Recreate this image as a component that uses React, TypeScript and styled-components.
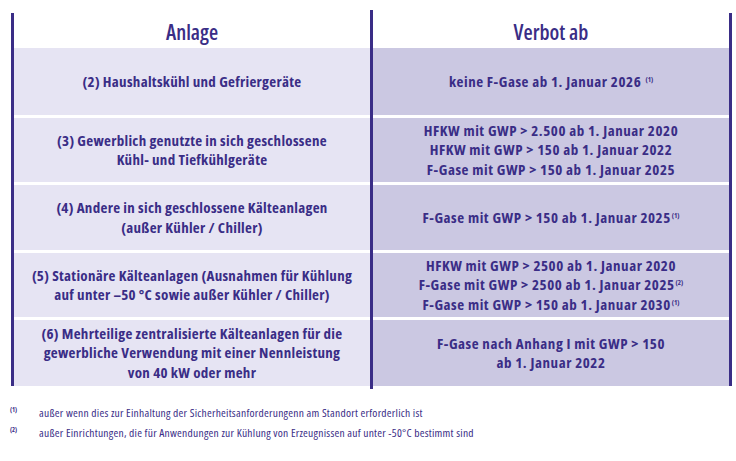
import styled, { createGlobalStyle } from "styled-components";

const ink = "#3a2d86";

const GlobalStyle = createGlobalStyle`
    html, body {
        margin: 0;
        padding: 0;
        background: #fff;
    }
    body {
        font-family: "Open Sans", "DejaVu Sans Condensed", sans-serif;
        font-stretch: 75%;
        color: ${ink};
    }
`;

interface Row {
    anlage: React.ReactNode;
    verbot: React.ReactNode;
    height: number;
}

const Sup = ({ n }: { n: number }) => <Mark>({n})</Mark>;

const rows: Row[] = [
    {
        anlage: "(2) Haushaltskühl und Gefriergeräte",
        verbot: <>keine F-Gase ab 1. Januar 2026 <Sup n={1} /></>,
        height: 67,
    },
    {
        anlage: <>(3) Gewerblich genutzte in sich geschlossene<br />Kühl- und Tiefkühlgeräte</>,
        verbot: (
            <>
                HFKW mit GWP &gt; 2.500 ab 1. Januar 2020<br />
                HFKW mit GWP &gt; 150 ab 1. Januar 2022<br />
                F-Gase mit GWP &gt; 150 ab 1. Januar 2025
            </>
        ),
        height: 64,
    },
    {
        anlage: <>(4) Andere in sich geschlossene Kälteanlagen<br />(außer Kühler / Chiller)</>,
        verbot: <>F-Gase mit GWP &gt; 150 ab 1. Januar 2025<Sup n={1} /></>,
        height: 65,
    },
    {
        anlage: <>(5) Stationäre Kälteanlagen (Ausnahmen für Kühlung<br />auf unter –50 °C sowie außer Kühler / Chiller)</>,
        verbot: (
            <>
                HFKW mit GWP &gt; 2500 ab 1. Januar 2020<br />
                F-Gase mit GWP &gt; 2500 ab 1. Januar 2025<Sup n={2} /><br />
                F-Gase mit GWP &gt; 150 ab 1. Januar 2030<Sup n={1} />
            </>
        ),
        height: 64,
    },
    {
        anlage: (
            <>
                (6) Mehrteilige zentralisierte Kälteanlagen für die<br />
                gewerbliche Verwendung mit einer Nennleistung<br />
                von 40 kW oder mehr
            </>
        ),
        verbot: <>F-Gase nach Anhang I mit GWP &gt; 150<br />ab 1. Januar 2022</>,
        height: 66,
    },
];

const notes = [
    "außer wenn dies zur Einhaltung der Sicherheitsanforderungenn am Standort erforderlich ist",
    "außer Einrichtungen, die für Anwendungen zur Kühlung von Erzeugnissen auf unter -50°C bestimmt sind",
];

export default function App() {
    return (
        <>
            <GlobalStyle />
            <Page>
                <Table style={{ gridTemplateRows: `32px ${rows.map((r) => r.height + "px").join(" ")}` }}>
                    <HeadCell>Anlage</HeadCell>
                    <Divider />
                    <HeadCell $col={3}>Verbot ab</HeadCell>
                    {rows.map((row, i) => (
                        <Line key={i} $row={i + 2}>
                            <Cell $tone="light"><Text>{row.anlage}</Text></Cell>
                            <Cell $tone="dark" $col={3}><Text $wide>{row.verbot}</Text></Cell>
                        </Line>
                    ))}
                </Table>

                <Notes>
                    {notes.map((text, i) => (
                        <Note key={i}>
                            <NoteMark>({i + 1})</NoteMark>
                            <span>{text}</span>
                        </Note>
                    ))}
                </Notes>
            </Page>
        </>
    );
}

const Page = styled.div`
    width: 736px;
    height: 461px;
    padding: 13px 0 0 11px;
    box-sizing: border-box;
    overflow: hidden;
`;

const Table = styled.div`
    display: grid;
    grid-template-columns: 356px 3px 356px;
    row-gap: 3px;
    width: 721px;
    box-sizing: border-box;
    border-left: 3px solid ${ink};
    border-right: 3px solid ${ink};
`;

const Divider = styled.div`
    grid-column: 2;
    grid-row: 1 / -1;
    background: ${ink};
    margin: -3px 0;
`;

const HeadCell = styled.div<{ $col?: number }>`
    grid-column: ${(p) => p.$col ?? 1};
    grid-row: 1;
    display: flex;
    align-items: center;
    justify-content: center;
    font-size: 21px;
    font-weight: 600;
    padding-top: 6px;
`;

const Line = styled.div<{ $row: number }>`
    display: contents;

    & > * {
        grid-row: ${(p) => p.$row};
    }
`;

const Cell = styled.div<{ $tone: "light" | "dark"; $col?: number }>`
    grid-column: ${(p) => p.$col ?? 1};
    display: flex;
    align-items: center;
    justify-content: center;
    background: ${(p) => (p.$tone === "light" ? "#e6e4f3" : "#cbc8e2")};
`;

const Text = styled.p<{ $wide?: boolean }>`
    margin: 0;
    text-align: center;
    white-space: nowrap;
    font-size: 15px;
    font-weight: 700;
    letter-spacing: ${(p) => (p.$wide ? "0.55px" : "0.3px")};
    line-height: 19.5px;
`;

const Mark = styled.sup`
    font-size: 7px;
    line-height: 0;
    vertical-align: 5px;
    margin-left: 1px;
    letter-spacing: 0;
`;

const Notes = styled.div`
    display: flex;
    flex-direction: column;
    gap: 6px;
    margin-top: 20px;
    margin-left: -1px;
`;

const Note = styled.div`
    display: flex;
    align-items: flex-start;
    font-size: 11.5px;
    letter-spacing: 0.25px;
    line-height: 14px;
    font-weight: 500;
`;

const NoteMark = styled.span`
    width: 29px;
    flex: none;
    font-size: 6.5px;
    line-height: 8px;
    font-weight: 700;
    letter-spacing: 0;
`;
